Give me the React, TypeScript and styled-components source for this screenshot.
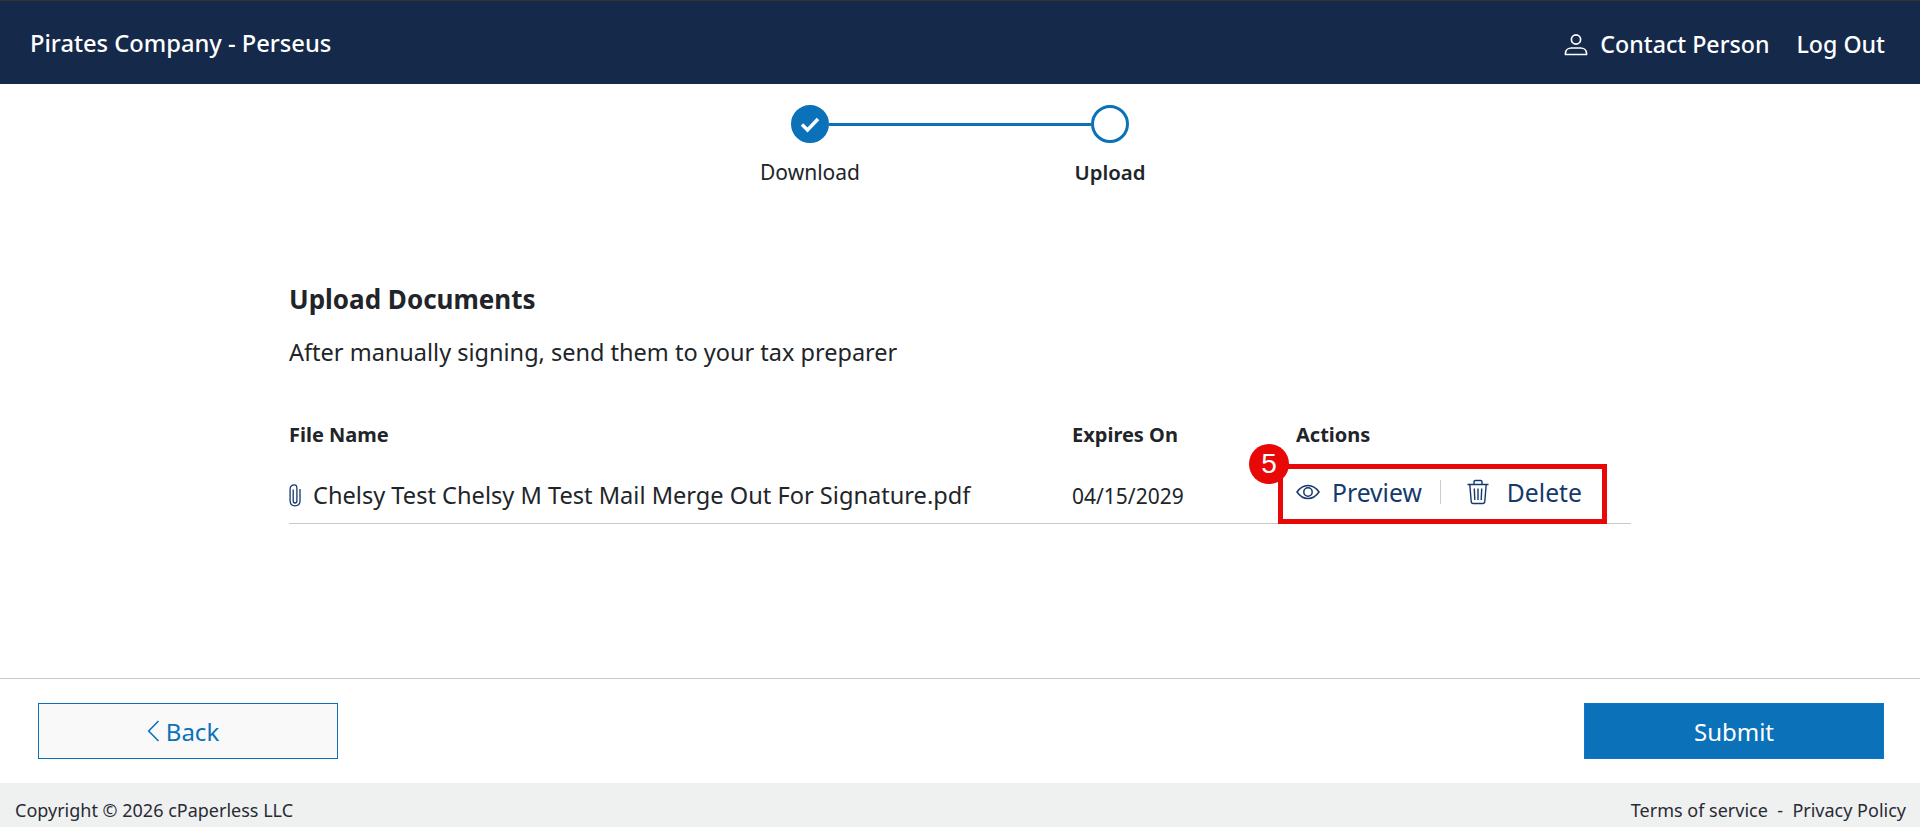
import React from 'react';
import styled, { createGlobalStyle } from 'styled-components';

const NAVY = '#15294b';
const BLUE = '#0b72ba';
const INK = '#212529';
const LINK = '#15396b';
const RED = '#e80808';

const GlobalStyle = createGlobalStyle`
  html, body {
    margin: 0;
    padding: 0;
    background: #fff;
    font-family: "Noto Sans", "Open Sans", sans-serif;
    color: ${INK};
  }
  * {
    box-sizing: border-box;
  }
`;

const UserIcon = () => (
  <svg width="26" height="26" viewBox="0 0 26 26" fill="none" stroke="#fff" strokeWidth="1.7">
    <circle cx="13" cy="8.5" r="4.6" />
    <path d="M2.5 23.5v-1.2c0-3.4 3-5.3 6-5.3h9c3 0 6 1.900 6 5.300v1.200z" strokeLinejoin="round" />
  </svg>
);

const CheckIcon = () => (
  <svg width="22" height="22" viewBox="0 0 22 22" fill="none" stroke="#fff" strokeWidth="3.400">
    <path d="M3 11.500l5.500 5.500 10.500-11" />
  </svg>
);

const ClipIcon = () => (
  <svg width="12" height="24" viewBox="0 0 12 24" fill="none" stroke={LINK} strokeWidth="1.300">
    <path d="M4.200 6.500v11.500c0 1.300.8 2 1.800 2s1.900-.7 1.900-2V5.500C7.900 3.200 7 1.800 5.600 1.800 3 1.800 1.100 3.500 1.100 6v12c0 3 2 4.800 4.900 4.800s5-1.800 5-4.800V6" />
  </svg>
);

const EyeIcon = () => (
  <svg width="24" height="24" viewBox="0 0 24 24" fill="none" stroke={LINK} strokeWidth="1.500">
    <path d="M1 12c2.800-4 6.600-6.500 11-6.500S20.200 8 23 12c-2.800 4-6.600 6.500-11 6.500S3.800 16 1 12z" />
    <circle cx="12" cy="12" r="4.200" />
  </svg>
);

const TrashIcon = () => (
  <svg width="24" height="26" viewBox="0 0 24 26" fill="none" stroke={LINK} strokeWidth="1.400">
    <path d="M1.500 5.500h21M8 5.500V2.800c0-.8.6-1.300 1.300-1.300h5.400c.7 0 1.300.5 1.300 1.300v2.700" />
    <path d="M3.800 5.500l1.400 17c.1 1.200.9 2 2 2h9.600c1.100 0 1.900-.8 2-2l1.400-17" />
    <path d="M8.300 9.500l.5 11.500M12 9.500V21M15.700 9.500L15.200 21" />
  </svg>
);

const BackIcon = () => (
  <svg width="13" height="24" viewBox="0 0 13 24" fill="none" stroke={BLUE} strokeWidth="1.600">
    <path d="M11.500 2L1.700 12l9.800 10" />
  </svg>
);

export default function App() {
  return (
    <Page>
      <GlobalStyle />
      <Header>
        <Brand>Pirates Company - Perseus</Brand>
        <HeaderNav>
          <HeaderLink>
            <UserIcon />
            Contact Person
          </HeaderLink>
          <HeaderLink>Log Out</HeaderLink>
        </HeaderNav>
      </Header>

      <Stepper>
        <StepTrack>
          <StepDot done>
            <CheckIcon />
          </StepDot>
          <StepLine />
          <StepDot />
        </StepTrack>
        <StepLabels>
          <StepLabel>Download</StepLabel>
          <StepLabel active>Upload</StepLabel>
        </StepLabels>
      </Stepper>

      <Main>
        <Title>Upload Documents</Title>
        <Subtitle>After manually signing, send them to your tax preparer</Subtitle>
        <Table>
          <HeadRow>
            <HeadCell>File Name</HeadCell>
            <HeadCell>Expires On</HeadCell>
            <HeadCell>Actions</HeadCell>
          </HeadRow>
          <BodyRow>
            <FileCell>
              <ClipIcon />
              Chelsy Test Chelsy M Test Mail Merge Out For Signature.pdf
            </FileCell>
            <DateCell>04/15/2029</DateCell>
            <ActionsCell>
              <ActionLink>
                <EyeIcon />
                Preview
              </ActionLink>
              <ActionDivider />
              <ActionLink wide>
                <TrashIcon />
                Delete
              </ActionLink>
              <Highlight>
                <Badge>5</Badge>
              </Highlight>
            </ActionsCell>
          </BodyRow>
        </Table>
      </Main>

      <ActionBar>
        <BackButton>
          <BackIcon />
          Back
        </BackButton>
        <SubmitButton>Submit</SubmitButton>
      </ActionBar>

      <Footer>
        <FooterText>Copyright © 2026 cPaperless LLC</FooterText>
        <FooterText>Terms of service&nbsp; -&nbsp; Privacy Policy</FooterText>
      </Footer>
    </Page>
  );
}

const Page = styled.div`
  display: flex;
  flex-direction: column;
  height: 827px;
  overflow: hidden;
`;

const Header = styled.header`
  flex: none;
  display: flex;
  align-items: center;
  justify-content: space-between;
  height: 84px;
  padding: 0 35px 0 30px;
  background: ${NAVY};
  border-top: 1px solid #333;
  color: #fff;
`;

const Brand = styled.div`
  font-size: 23.700px;
  font-weight: 500;
`;

const HeaderNav = styled.nav`
  display: flex;
  align-items: center;
  gap: 27px;
  padding-top: 2px;
`;

const HeaderLink = styled.a`
  display: flex;
  align-items: center;
  gap: 11px;
  font-size: 23.200px;
  font-weight: 500;
`;

const Stepper = styled.div`
  flex: none;
  display: flex;
  flex-direction: column;
  align-items: center;
  padding-top: 21px;
`;

const StepTrack = styled.div`
  display: flex;
  align-items: center;
  width: 338px;
`;

const StepDot = styled.div<{ done?: boolean }>`
  flex: none;
  display: flex;
  align-items: center;
  justify-content: center;
  width: 38px;
  height: 38px;
  border-radius: 50%;
  border: 3px solid ${BLUE};
  background: ${props => (props.done ? BLUE : '#fff')};
`;

const StepLine = styled.div`
  flex: 1;
  height: 3px;
  background: ${BLUE};
`;

const StepLabels = styled.div`
  display: grid;
  grid-template-columns: 300px 300px;
  margin-top: 15px;
`;

const StepLabel = styled.div<{ active?: boolean }>`
  text-align: center;
  font-size: ${props => (props.active ? '20.400px' : '21px')};
  line-height: 28px;
  font-weight: ${props => (props.active ? 600 : 400)};
  color: ${INK};
`;

const Main = styled.main`
  flex: 1;
  padding: 96px 289px 0;
`;

const Title = styled.h2`
  margin: 0;
  font-size: 26px;
  line-height: 34px;
  font-weight: 700;
  color: ${INK};
`;

const Subtitle = styled.p`
  margin: 19px 0 0;
  font-size: 23.500px;
  line-height: 34px;
  color: ${INK};
`;

const Table = styled.div`
  margin-top: 52px;
`;

const HeadRow = styled.div`
  display: grid;
  grid-template-columns: 783px 224px 1fr;
`;

const HeadCell = styled.div`
  font-size: 20px;
  line-height: 28px;
  font-weight: 700;
`;

const BodyRow = styled.div`
  display: grid;
  grid-template-columns: 783px 224px 1fr;
  align-items: center;
  height: 61px;
  margin-top: 14px;
  border-bottom: 1px solid #c8c8c8;
`;

const FileCell = styled.div`
  display: flex;
  align-items: center;
  gap: 12px;
  font-size: 23.600px;
  padding-top: 4px;
`;

const DateCell = styled.div`
  font-size: 21px;
  padding-top: 5px;
`;

const ActionsCell = styled.div`
  position: relative;
  display: flex;
  align-items: center;
  height: 100%;
  padding-bottom: 2px;
`;

const ActionLink = styled.a<{ wide?: boolean }>`
  display: flex;
  align-items: center;
  gap: ${props => (props.wide ? '17px' : '12px')};
  font-size: 24.700px;
  color: ${LINK};
`;

const ActionDivider = styled.span`
  width: 1px;
  height: 24px;
  margin: 0 25px 0 18px;
  background: #ccc;
`;

const Highlight = styled.div`
  position: absolute;
  left: -18px;
  top: 1px;
  width: 329px;
  height: 60px;
  border: 5px solid ${RED};
`;

const Badge = styled.span`
  position: absolute;
  left: -34px;
  top: -25px;
  display: flex;
  align-items: center;
  justify-content: center;
  width: 40px;
  height: 40px;
  border-radius: 50%;
  background: ${RED};
  color: #fff;
  font-family: "Liberation Sans", sans-serif;
  font-size: 28px;
`;

const ActionBar = styled.div`
  flex: none;
  display: flex;
  align-items: center;
  justify-content: space-between;
  height: 105px;
  padding: 0 36px 0 38px;
  border-top: 1px solid #c8c8c8;
`;

const BackButton = styled.button`
  display: flex;
  align-items: center;
  justify-content: center;
  gap: 6px;
  width: 300px;
  height: 56px;
  padding: 0 10px 0 0;
  background: #f9f9f9;
  border: 1px solid ${BLUE};
  color: ${BLUE};
  font: inherit;
  font-size: 24px;
`;

const SubmitButton = styled.button`
  width: 300px;
  height: 56px;
  background: ${BLUE};
  border: 1px solid #0a78d0;
  color: #fff;
  font: inherit;
  font-size: 24px;
`;

const Footer = styled.footer`
  flex: none;
  display: flex;
  align-items: center;
  justify-content: space-between;
  height: 44px;
  padding: 9px 14px 0 15px;
  background: #eff1f1;
`;

const FooterText = styled.span`
  font-size: 18px;
  color: #2a2a33;
`;
